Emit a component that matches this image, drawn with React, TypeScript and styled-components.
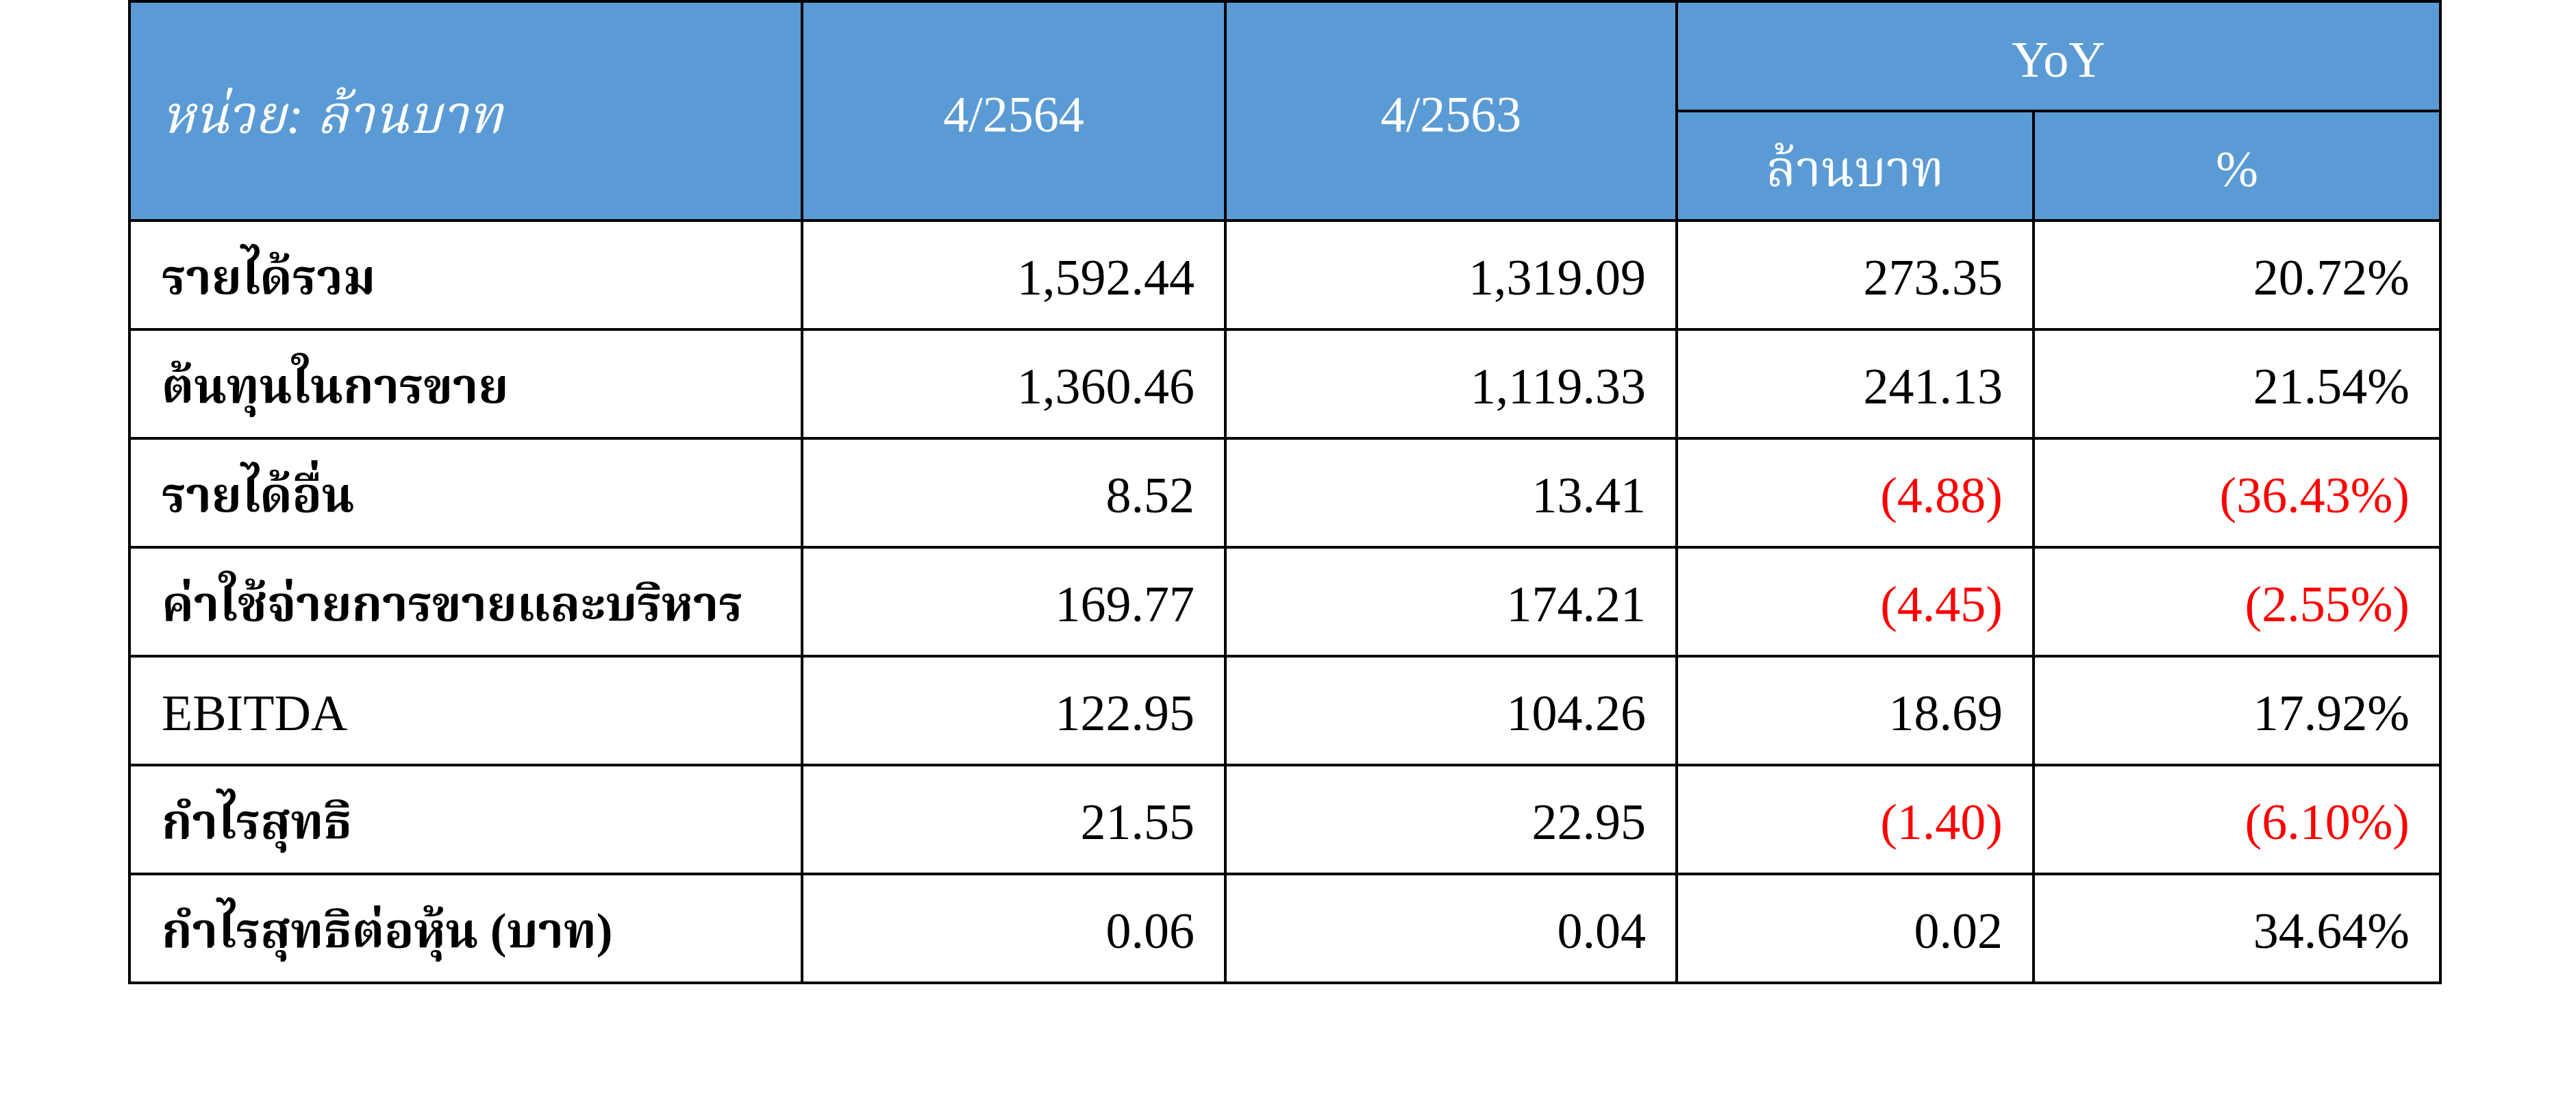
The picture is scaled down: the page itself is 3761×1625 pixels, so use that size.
import { createGlobalStyle, styled } from 'styled-components';

const GlobalStyle = createGlobalStyle`
  html, body {
    margin: 0;
    padding: 0;
    background: #ffffff;
  }
  body {
    font-family: "Liberation Serif", "Noto Serif Thai", "Noto Sans Thai", "Norasi", "Garuda", serif;
  }
`;

const Page = styled.div`
  padding: 0 0 0 187px;
`;

const Table = styled.table`
  border-collapse: collapse;
  table-layout: fixed;
  width: 3375px;
  font-size: 74px;
  line-height: 1.1;
  color: #000;
`;

const HeadRow = styled.tr`
  height: 160px;
`;

const HeadCell = styled.th<{ $align?: 'left' | 'center' }>`
  background: #5b9bd5;
  color: #ffffff;
  font-weight: 400;
  border: 4px solid #000;
  text-align: ${(p) => p.$align ?? 'center'};
  padding: ${(p) => (p.$align === 'left' ? '12px 0 0 45px' : '12px 0 0 0')};
  white-space: nowrap;
`;

const UnitLabel = styled.span`
  font-style: italic;
  font-size: 77px;
`;

const BodyRow = styled.tr`
  height: 159px;
`;

const LabelCell = styled.td<{ $thai?: boolean }>`
  border: 4px solid #000;
  padding: 8px 0 0 45px;
  text-align: left;
  font-weight: ${(p) => (p.$thai ? 700 : 400)};
  font-size: ${(p) => (p.$thai ? '71px' : '74px')};
  white-space: nowrap;
`;

const NumCell = styled.td<{ $neg?: boolean }>`
  border: 4px solid #000;
  padding: 8px 43px 0 0;
  text-align: right;
  color: ${(p) => (p.$neg ? '#ff0000' : '#000')};
  white-space: nowrap;
`;

type Row = {
  label: string;
  thai: boolean;
  cur: string;
  prev: string;
  diff: string;
  pct: string;
};

const rows: Row[] = [
  { label: 'รายได้รวม', thai: true, cur: '1,592.44', prev: '1,319.09', diff: '273.35', pct: '20.72%' },
  { label: 'ต้นทุนในการขาย', thai: true, cur: '1,360.46', prev: '1,119.33', diff: '241.13', pct: '21.54%' },
  { label: 'รายได้อื่น', thai: true, cur: '8.52', prev: '13.41', diff: '(4.88)', pct: '(36.43%)' },
  { label: 'ค่าใช้จ่ายการขายและบริหาร', thai: true, cur: '169.77', prev: '174.21', diff: '(4.45)', pct: '(2.55%)' },
  { label: 'EBITDA', thai: false, cur: '122.95', prev: '104.26', diff: '18.69', pct: '17.92%' },
  { label: 'กำไรสุทธิ', thai: true, cur: '21.55', prev: '22.95', diff: '(1.40)', pct: '(6.10%)' },
  { label: 'กำไรสุทธิต่อหุ้น (บาท)', thai: true, cur: '0.06', prev: '0.04', diff: '0.02', pct: '34.64%' },
];

const isNeg = (v: string) => v.startsWith('(');

export default function App() {
  return (
    <>
      <GlobalStyle />
      <Page>
        <Table>
          <colgroup>
            <col style={{ width: 982 }} />
            <col style={{ width: 618 }} />
            <col style={{ width: 659 }} />
            <col style={{ width: 521 }} />
            <col style={{ width: 594 }} />
          </colgroup>
          <thead>
            <HeadRow>
              <HeadCell rowSpan={2} $align="left">
                <UnitLabel>หน่วย: ล้านบาท</UnitLabel>
              </HeadCell>
              <HeadCell rowSpan={2}>4/2564</HeadCell>
              <HeadCell rowSpan={2}>4/2563</HeadCell>
              <HeadCell colSpan={2}>YoY</HeadCell>
            </HeadRow>
            <HeadRow>
              <HeadCell>ล้านบาท</HeadCell>
              <HeadCell>%</HeadCell>
            </HeadRow>
          </thead>
          <tbody>
            {rows.map((r) => (
              <BodyRow key={r.label}>
                <LabelCell $thai={r.thai}>{r.label}</LabelCell>
                <NumCell>{r.cur}</NumCell>
                <NumCell>{r.prev}</NumCell>
                <NumCell $neg={isNeg(r.diff)}>{r.diff}</NumCell>
                <NumCell $neg={isNeg(r.pct)}>{r.pct}</NumCell>
              </BodyRow>
            ))}
          </tbody>
        </Table>
      </Page>
    </>
  );
}
